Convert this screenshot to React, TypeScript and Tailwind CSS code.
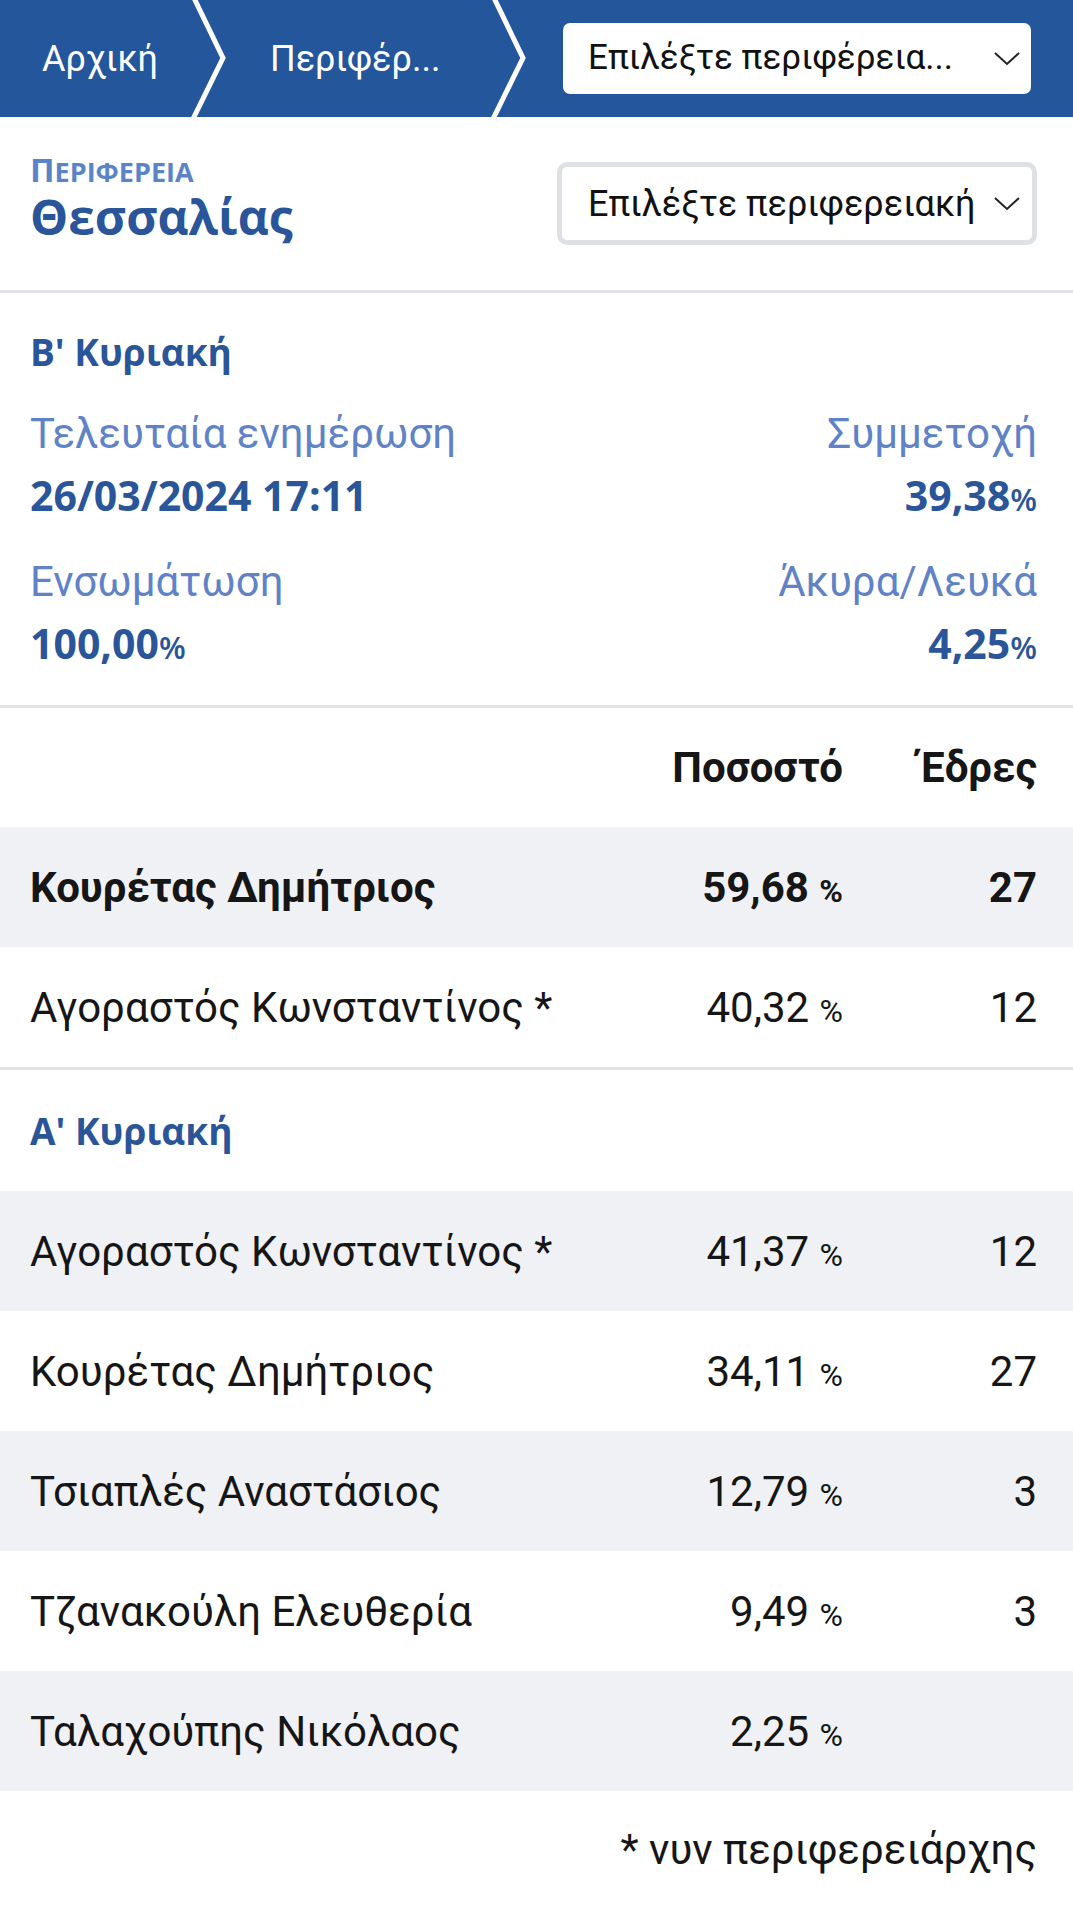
import React from 'react';

const roboto = "font-['Roboto','Liberation_Sans',sans-serif]";
const heading = "font-['Open_Sans','Noto_Sans','DejaVu_Sans',sans-serif]";

type Row = { name: string; pct: string; seats?: string; bold?: boolean };

const secondRound: Row[] = [
  { name: 'Κουρέτας Δημήτριος', pct: '59,68', seats: '27', bold: true },
  { name: 'Αγοραστός Κωνσταντίνος *', pct: '40,32', seats: '12' },
];

const firstRound: Row[] = [
  { name: 'Αγοραστός Κωνσταντίνος *', pct: '41,37', seats: '12' },
  { name: 'Κουρέτας Δημήτριος', pct: '34,11', seats: '27' },
  { name: 'Τσιαπλές Αναστάσιος', pct: '12,79', seats: '3' },
  { name: 'Τζανακούλη Ελευθερία', pct: '9,49', seats: '3' },
  { name: 'Ταλαχούπης Νικόλαος', pct: '2,25' },
];

function Chevron() {
  return (
    <svg width="42" height="117" viewBox="0 0 42 117" className="shrink-0">
      <polyline points="6,-2 35,58 5,119" fill="none" stroke="white" strokeWidth="5" />
    </svg>
  );
}

function SelectArrow() {
  return (
    <svg width="26" height="14" viewBox="0 0 26 14" className="shrink-0">
      <polyline points="1,1 13,12 25,1" fill="none" stroke="#222" strokeWidth="2" />
    </svg>
  );
}

function Stat({ label, value, right }: { label: string; value: string; right?: boolean }) {
  return (
    <div className={right ? 'text-right' : ''}>
      <div className="text-[42px] leading-[50px] text-[#5f83c6]">{label}</div>
      <div className={`${heading} mt-[11px] text-[41px] leading-[50px] font-bold text-[#2a5699]`}>
        {value}
        <span className="text-[31px] font-semibold">%</span>
      </div>
    </div>
  );
}

function ResultRow({ row, shaded }: { row: Row; shaded: boolean }) {
  return (
    <div
      className={`grid grid-cols-[1fr_250px_194px] items-center h-[120px] pl-[30px] pr-[36px] text-[42px] text-[#161616] ${
        shaded ? 'bg-[#f0f1f4]' : 'bg-white'
      } ${row.bold ? 'font-bold' : 'font-normal'}`}
    >
      <div className="whitespace-nowrap">{row.name}</div>
      <div className="text-right whitespace-nowrap">
        {row.pct} <span className="text-[32px]">%</span>
      </div>
      <div className="text-right">{row.seats ?? ''}</div>
    </div>
  );
}

export default function App() {
  return (
    <div className={`w-[1073px] min-h-[1908px] bg-white ${roboto}`}>
      {/* breadcrumb bar */}
      <div className="flex items-center h-[117px] bg-[#23569b] text-white text-[36px]">
        <div className="w-[188px] pl-[42px]">Αρχική</div>
        <Chevron />
        <div className="w-[258px] pl-[40px] whitespace-nowrap">Περιφέρ...</div>
        <Chevron />
        <div className="ml-[33px] flex items-center justify-between w-[468px] h-[71px] bg-white rounded-[7px] pl-[25px] pr-[11px] text-[35px] text-[#111]">
          <span className="whitespace-nowrap">Επιλέξτε περιφέρεια...</span>
          <SelectArrow />
        </div>
      </div>

      {/* region title */}
      <div className="flex justify-between items-start h-[176px] pl-[30px] pr-[36px] pt-[36px] border-b-[3px] border-[#e1e3e6]">
        <div className={heading}>
          <div className="flex items-baseline h-[34px] leading-none font-bold text-[#5b84c8]">
            <span className="text-[33px]">Π</span>
            <span className="text-[27px]">ΕΡΙΦΕΡΕΙΑ</span>
          </div>
          <div className="mt-[6px] text-[48px] leading-none font-bold text-[#2a5699]">Θεσσαλίας</div>
        </div>
        <div className="mt-[9px] flex items-center justify-between w-[480px] h-[83px] border-[5px] border-[#dde1e6] rounded-[10px] pl-[26px] pr-[12px] text-[36px] text-[#111]">
          <span className="whitespace-nowrap">Επιλέξτε περιφερειακή</span>
          <SelectArrow />
        </div>
      </div>

      {/* stats */}
      <div className="pl-[30px] pr-[36px] pt-[34px] pb-[33px] border-b-[3px] border-[#e1e3e6]">
        <div className={`${heading} text-[37px] leading-[50px] font-bold text-[#2a5699]`}>Β' Κυριακή</div>
        <div className="mt-[32px] flex justify-between">
          <div>
            <div className="text-[42px] leading-[50px] text-[#5f83c6]">Τελευταία ενημέρωση</div>
            <div className={`${heading} mt-[11px] text-[41px] leading-[50px] font-bold text-[#2a5699]`}>
              26/03/2024 17:11
            </div>
          </div>
          <Stat label="Συμμετοχή" value="39,38" right />
        </div>
        <div className="mt-[33px] flex justify-between">
          <Stat label="Ενσωμάτωση" value="100,00" />
          <Stat label="Άκυρα/Λευκά" value="4,25" right />
        </div>
      </div>

      {/* table head */}
      <div className="grid grid-cols-[1fr_250px_194px] items-center h-[119px] pl-[30px] pr-[36px] text-[42px] font-bold text-[#161616]">
        <div />
        <div className="text-right">Ποσοστό</div>
        <div className="text-right">Έδρες</div>
      </div>

      <div className="border-b-[3px] border-[#e1e3e6]">
        {secondRound.map((r, i) => (
          <ResultRow key={r.name} row={r} shaded={i % 2 === 0} />
        ))}
      </div>

      <div className={`${heading} flex items-center h-[121px] pl-[30px] text-[37px] font-bold text-[#2a5699]`}>
        Α' Κυριακή
      </div>

      {firstRound.map((r, i) => (
        <ResultRow key={r.name} row={r} shaded={i % 2 === 0} />
      ))}

      <div className="mt-[34px] pr-[36px] text-right text-[42px] leading-[50px] text-[#161616]">
        * νυν περιφερειάρχης
      </div>
    </div>
  );
}
